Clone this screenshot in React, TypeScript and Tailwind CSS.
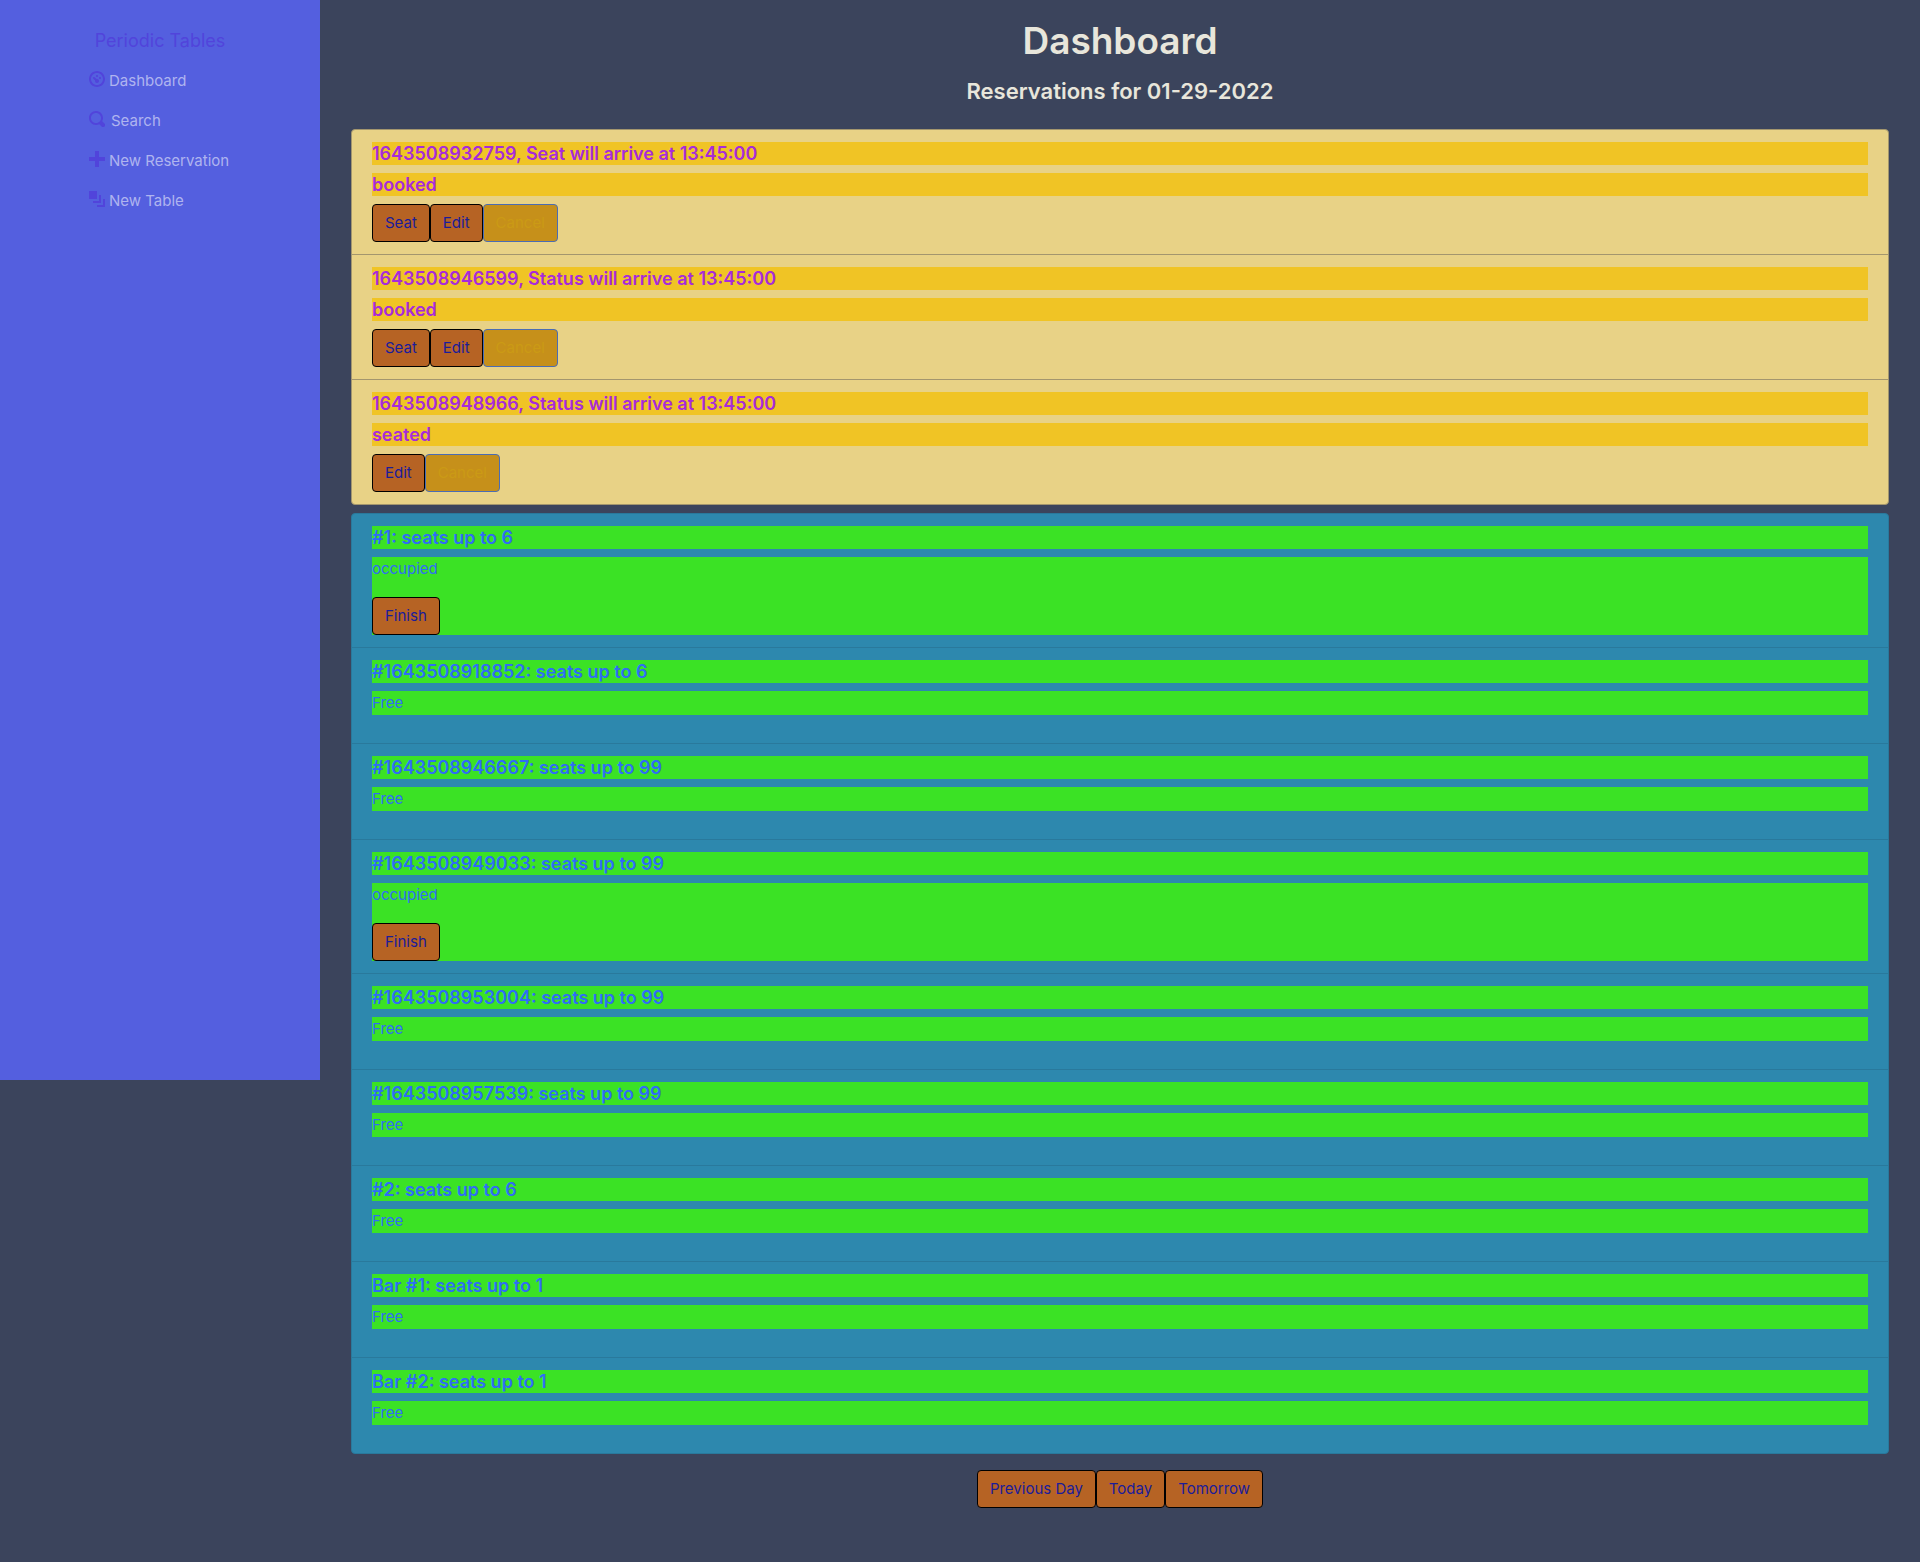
import React from "react";

const ICONS = {
  dashboard:
    "M4 0c-2.2 0-4 1.8-4 4s1.8 4 4 4 4-1.8 4-4-1.8-4-4-4zm0 1c1.66 0 3 1.34 3 3s-1.34 3-3 3-3-1.34-3-3 1.34-3 3-3zm0 1c-.28 0-.5.22-.5.5s.22.5.5.5.5-.22.5-.5-.22-.5-.5-.5zm-1.66 1a.5.5 0 0 0-.19.84l.91.91c-.02.08-.06.16-.06.25 0 .55.45 1 1 1s1-.45 1-1-.45-1-1-1c-.09 0-.17.04-.25.06l-.91-.91a.5.5 0 0 0-.44-.16.5.5 0 0 0-.06 0zm3.16 0c-.28 0-.5.22-.5.5s.22.5.5.5.5-.22.5-.5-.22-.5-.5-.5z",
  search:
    "M3.5 0c-1.93 0-3.5 1.57-3.5 3.5s1.57 3.5 3.5 3.5c.59 0 1.17-.14 1.66-.41a1 1 0 0 0 .13.13l1 1a1.02 1.02 0 1 0 1.44-1.44l-1-1a1 1 0 0 0-.16-.13c.27-.49.44-1.06.44-1.66 0-1.93-1.55-3.5-3.5-3.5zm0 1c1.39 0 2.5 1.11 2.5 2.5 0 .66-.24 1.27-.66 1.72-.01.01-.02.02-.03.03a1 1 0 0 0-.13.13c-.44.4-1.04.63-1.69.63-1.39 0-2.5-1.11-2.5-2.5s1.11-2.5 2.5-2.5z",
  plus: "M3 0v3h-3v2h3v3h2v-3h3v-2h-3v-3h-2z",
  layers: "M0 0v4h4v-4h-4zm5 2v3h-3v1h4v-4h-1zm2 2v3h-3v1h4v-4h-1z",
};

const NAV = [
  { label: "Dashboard", icon: ICONS.dashboard, gap: "gap-1" },
  { label: "Search", icon: ICONS.search, gap: "gap-1.5" },
  { label: "New Reservation", icon: ICONS.plus, gap: "gap-1" },
  { label: "New Table", icon: ICONS.layers, gap: "gap-1" },
];

const RESERVATIONS = [
  { title: "1643508932759, Seat will arrive at 13:45:00", status: "booked" },
  { title: "1643508946599, Status will arrive at 13:45:00", status: "booked" },
  { title: "1643508948966, Status will arrive at 13:45:00", status: "seated" },
];

const TABLES = [
  { name: "#1", seats: 6, occupied: true },
  { name: "#1643508918852", seats: 6, occupied: false },
  { name: "#1643508946667", seats: 99, occupied: false },
  { name: "#1643508949033", seats: 99, occupied: true },
  { name: "#1643508953004", seats: 99, occupied: false },
  { name: "#1643508957539", seats: 99, occupied: false },
  { name: "#2", seats: 6, occupied: false },
  { name: "Bar #1", seats: 1, occupied: false },
  { name: "Bar #2", seats: 1, occupied: false },
];

function Button({ children }: { children: React.ReactNode }) {
  return (
    <button
      type="button"
      className="h-[38px] rounded border border-black bg-[#b66324] px-3 text-[15px] leading-6 text-[#1a1c9a]"
    >
      {children}
    </button>
  );
}

function Sidebar() {
  return (
    <nav className="flex h-[1080px] w-1/6 shrink-0 flex-col items-center bg-[#545fdf] pt-[25px]">
      <a href="#" className="text-lg leading-8 text-[#5144db]">
        Periodic Tables
      </a>
      <ul className="mt-1 w-[142px]">
        {NAV.map((item) => (
          <li key={item.label}>
            <a href="#" className={`flex h-10 items-center text-[15px] leading-6 text-[#afb4ef] ${item.gap}`}>
              <svg viewBox="0 0 8 8" className="mb-1 size-4 fill-[#5144db]" aria-hidden="true">
                <path d={item.icon} />
              </svg>
              {item.label}
            </a>
          </li>
        ))}
      </ul>
    </nav>
  );
}

export default function App() {
  return (
    <div className="flex min-h-screen items-start bg-[#3b445c] font-['Inter',sans-serif]">
      <Sidebar />
      <main className="min-w-0 flex-1 px-[31px] pt-[17px]">
        <header className="mb-[22px] text-center font-semibold text-[#e8e6db]">
          <h1 className="text-[37px] leading-[48px]">Dashboard</h1>
          <h2 className="mt-2.5 text-[22px] leading-8">Reservations for 01-29-2022</h2>
        </header>

        <ul className="divide-y divide-[#a3966e] overflow-hidden rounded border border-[#a3966e] bg-[#e8d286]">
          {RESERVATIONS.map((r) => (
            <li key={r.title} className="px-5 py-3 text-lg font-semibold text-[#a72bda]">
              <h3 className="mb-2 bg-[#f0c425] leading-[23px]">{r.title}</h3>
              <h3 className="mb-2 bg-[#f0c425] leading-[23px]">{r.status}</h3>
              <div className="flex font-normal">
                {r.status === "booked" && <Button>Seat</Button>}
                <Button>Edit</Button>
                <button
                  type="button"
                  className="h-[38px] rounded border border-[#4a6cb4] bg-[#c6901a] px-3 text-[15px] leading-6 text-[#cb9a15]"
                >
                  Cancel
                </button>
              </div>
            </li>
          ))}
        </ul>

        <ul className="mt-2 divide-y divide-[#29799c] overflow-hidden rounded border border-[#29799c] bg-[#2d88ae]">
          {TABLES.map((t) => (
            <li key={t.name} className="px-5 py-3 text-[#2f6df5]">
              <h3 className="mb-2 bg-[#3be225] text-lg leading-[23px] font-semibold">
                {t.name}: seats up to {t.seats}
              </h3>
              {t.occupied ? (
                <div className="bg-[#3be225]">
                  <p className="mb-4 text-[15px] leading-6">occupied</p>
                  <div className="flex">
                    <Button>Finish</Button>
                  </div>
                </div>
              ) : (
                <p className="mb-4 bg-[#3be225] text-[15px] leading-6">Free</p>
              )}
            </li>
          ))}
        </ul>

        <div className="mt-4 flex justify-center pb-8">
          <Button>Previous Day</Button>
          <Button>Today</Button>
          <Button>Tomorrow</Button>
        </div>
      </main>
    </div>
  );
}
